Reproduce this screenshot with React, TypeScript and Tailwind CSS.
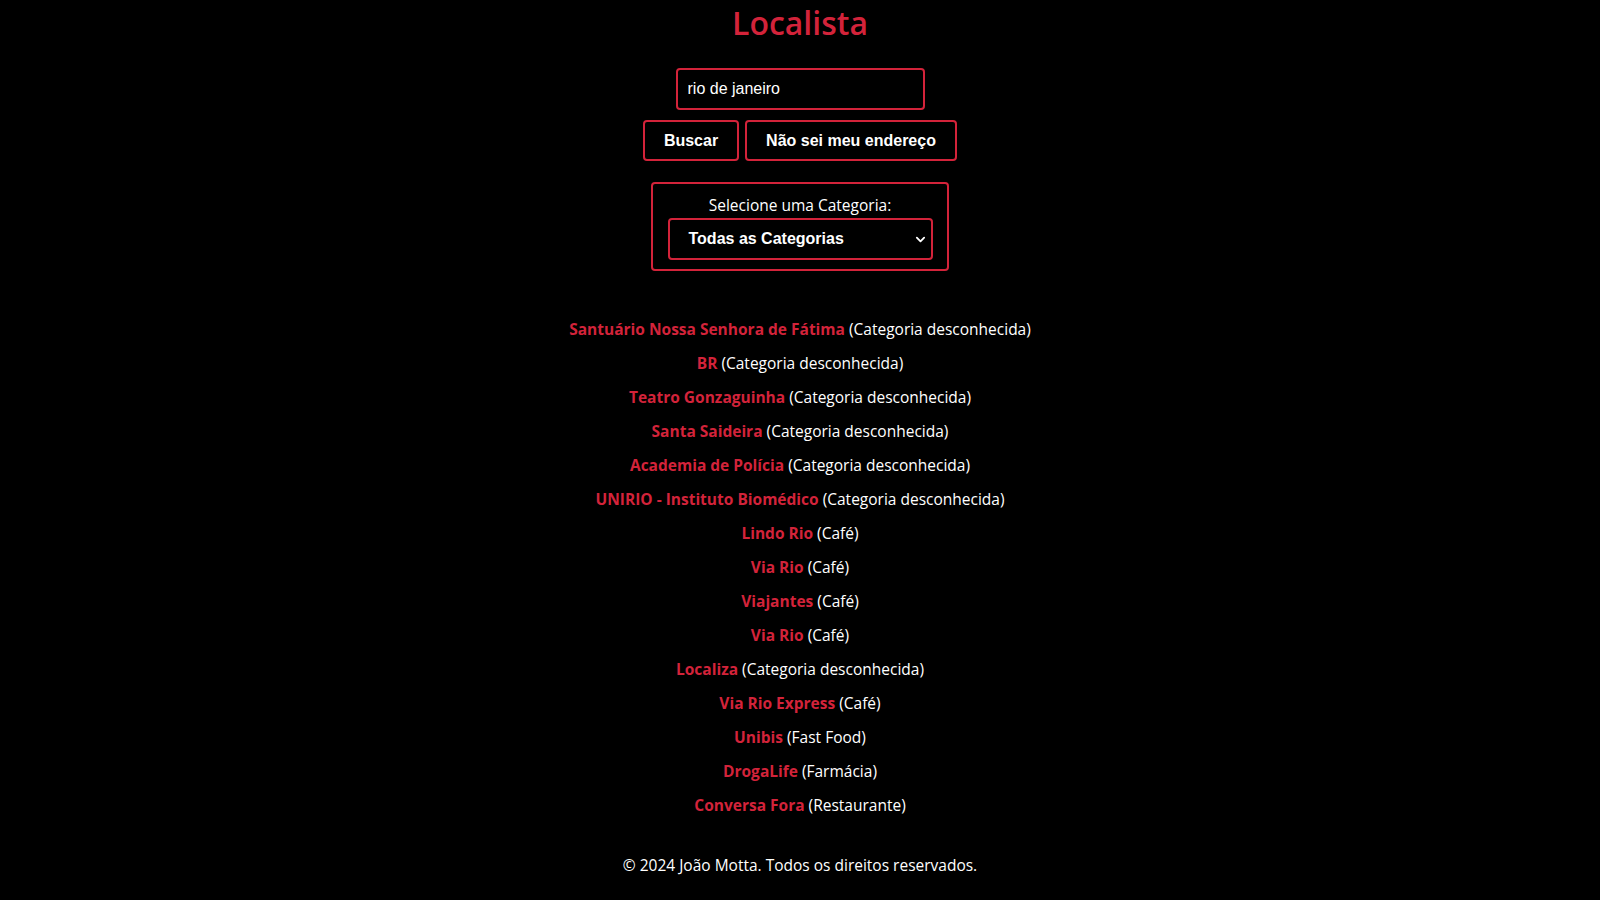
const places: { name: string; category: string }[] = [
  { name: 'Santuário Nossa Senhora de Fátima', category: 'Categoria desconhecida' },
  { name: 'BR', category: 'Categoria desconhecida' },
  { name: 'Teatro Gonzaguinha', category: 'Categoria desconhecida' },
  { name: 'Santa Saideira', category: 'Categoria desconhecida' },
  { name: 'Academia de Polícia', category: 'Categoria desconhecida' },
  { name: 'UNIRIO - Instituto Biomédico', category: 'Categoria desconhecida' },
  { name: 'Lindo Rio', category: 'Café' },
  { name: 'Via Rio', category: 'Café' },
  { name: 'Viajantes', category: 'Café' },
  { name: 'Via Rio', category: 'Café' },
  { name: 'Localiza', category: 'Categoria desconhecida' },
  { name: 'Via Rio Express', category: 'Café' },
  { name: 'Unibis', category: 'Fast Food' },
  { name: 'DrogaLife', category: 'Farmácia' },
  { name: 'Conversa Fora', category: 'Restaurante' },
];

export default function App() {
  return (
    <div className="min-h-screen bg-black text-white font-['Open_Sans',sans-serif] flex flex-col items-center">
      {/* header */}
      <h1 className="mt-[3px] text-[32px] leading-[40px] font-semibold text-[#d3233a]">Localista</h1>

      {/* search */}
      <input
        defaultValue="rio de janeiro"
        className="mt-[25px] w-[249px] h-[42px] bg-black border-2 border-[#d3233a] rounded-[4px] px-[10px] text-[16px] text-white font-['Liberation_Sans',Arial,sans-serif] outline-none"
      />
      <div className="mt-[10px] flex gap-[6px]">
        <button className="w-[96px] h-[41px] bg-black border-2 border-[#d3233a] rounded-[4px] text-[16px] font-bold text-white font-['Liberation_Sans',Arial,sans-serif]">
          Buscar
        </button>
        <button className="w-[212px] h-[41px] bg-black border-2 border-[#d3233a] rounded-[4px] text-[16px] font-bold text-white font-['Liberation_Sans',Arial,sans-serif]">
          Não sei meu endereço
        </button>
      </div>

      {/* category filter */}
      <div className="mt-[21px] w-[298px] h-[89px] border-2 border-[#d3233a] rounded-[4px] flex flex-col items-center pt-[10px]">
        <label className="text-[15.5px] leading-[22px] font-medium">Selecione uma Categoria:</label>
        <div className="relative mt-[2px] w-[265px] h-[42px] border-2 border-[#d3233a] rounded-[4px] flex items-center pl-[19px]">
          <span className="text-[16px] font-bold font-['Liberation_Sans',Arial,sans-serif]">Todas as Categorias</span>
          <svg className="absolute right-[5px] top-[14px]" width="11" height="11" viewBox="0 0 12 12" fill="none">
            <path d="M2 4l4 4 4-4" stroke="white" strokeWidth="2" strokeLinecap="round" strokeLinejoin="round" />
          </svg>
        </div>
      </div>

      {/* results */}
      <ul className="mt-[41px] flex flex-col items-center">
        {places.map((p, i) => (
          <li key={i} className="h-[34px] leading-[34px] text-[15.5px]">
            <span className="font-bold text-[#d3233a]">{p.name}</span> ({p.category})
          </li>
        ))}
      </ul>

      {/* footer */}
      <footer className="mt-[31px] text-[15.5px] leading-[24px]">© 2024 João Motta. Todos os direitos reservados.</footer>
    </div>
  );
}
